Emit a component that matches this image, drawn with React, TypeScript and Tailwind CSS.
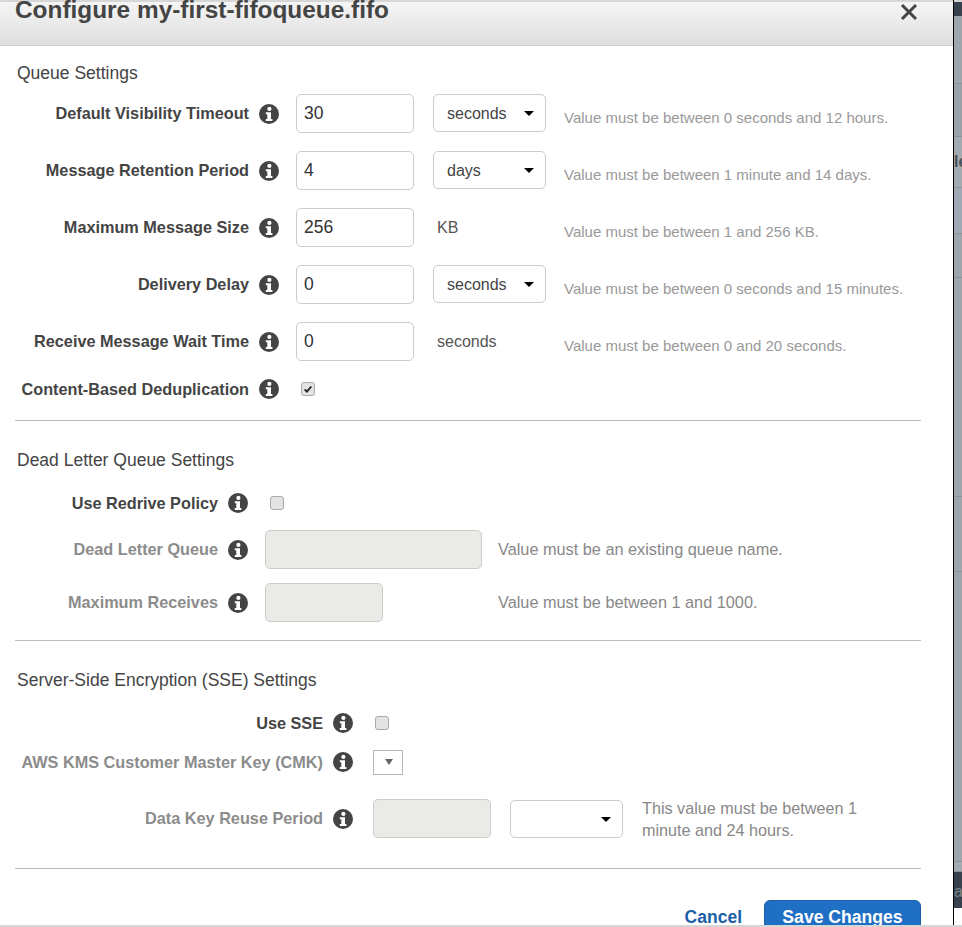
import React from "react";

function Info() {
  return (
    <svg viewBox="0 0 20 20" className="w-[20px] h-[20px] shrink-0">
      <circle cx="10" cy="10" r="10" fill="#444444" />
      <circle cx="10.4" cy="4.9" r="2.1" fill="#fff" />
      <path d="M6.8 8.3h5.2v6.7h1.4v2H6.8v-2h1.5v-4.7H6.8z" fill="#fff" />
    </svg>
  );
}

function Caret() {
  return <span className="w-0 h-0 border-x-[5px] border-x-transparent border-t-[5px] border-t-black" />;
}

function Row({ label, w, dim, h, tall, children }: { label: string; w: number; dim?: boolean; h: string; tall?: boolean; children?: React.ReactNode }) {
  return (
    <div className={`flex items-center ${h}`}>
      <div style={{ width: w }} className={`text-right font-bold text-[16.25px] leading-[20px] whitespace-nowrap ${tall ? "-mt-[2px]" : ""} ${dim ? "text-[#8c8c8c]" : "text-[#444444]"}`}>{label}</div>
      <div className="ml-[10px]"><Info /></div>
      <div className="ml-[17px] flex items-center h-full">{children}</div>
    </div>
  );
}

function Input({ v, w = "w-[118px]", off, extra = "" }: { v?: string; w?: string; off?: boolean; extra?: string }) {
  return <div className={`${w} ${extra} h-[39px] rounded-[5px] border border-[#cccccc] px-[7px] flex items-center text-[17.5px] text-[#333333] ${off ? "bg-[#eaeae7]" : "bg-white"}`}>{v}</div>;
}

function Select({ v }: { v?: string }) {
  return (
    <div className="self-start ml-[19px] w-[113px] h-[38px] rounded-[5px] border border-[#cccccc] bg-white pl-[13px] pr-[11px] flex items-center justify-between text-[16px] text-[#444444]">
      <span className="pt-[2px]">{v}</span>
      <Caret />
    </div>
  );
}

function Unit({ v }: { v: string }) {
  return <div className="ml-[23px] w-[109px] text-[16px] text-[#555555]">{v}</div>;
}

function Hint({ children }: { children: React.ReactNode }) {
  return <div className="text-[15px] leading-[22px] text-[#999999] whitespace-nowrap pt-[9px] ml-[18px]">{children}</div>;
}

function Check({ on }: { on?: boolean }) {
  return (
    <div className="ml-[5px] -mt-[1px] w-[14px] h-[14px] rounded-[3px] border border-[#a9a9a9] bg-[#e3e3e3] flex items-center justify-center">
      {on ? (
        <svg viewBox="0 0 12 12" className="w-[10px] h-[10px]"><path d="M2 6.5l2.6 2.6L10 3" stroke="#222" strokeWidth="2.2" fill="none" /></svg>
      ) : null}
    </div>
  );
}

function Heading({ children }: { children: React.ReactNode }) {
  return <div className="pl-[17px] text-[17.5px] leading-[24px] text-[#444444]">{children}</div>;
}

function Rule() {
  return <div className="ml-[15px] w-[906px] h-px bg-[#bdbdbd]" />;
}

function Band({ h, c = "bg-[#9ea6ac]", children }: { h: string; c?: string; children?: React.ReactNode }) {
  return <div className={`${h} ${c} shrink-0 border-b border-[#8b9298] overflow-hidden`}>{children}</div>;
}

export default function App() {
  return (
    <div className="relative w-[962px] h-[927px] overflow-hidden flex bg-white" style={{ fontFamily: '"Liberation Sans", Arial, sans-serif' }}>
      <div className="w-[953px] h-[927px] shrink-0 overflow-hidden">
        <div className="h-[2px] bg-[#d6d6d6]" />
        <div className="h-[44px] border-b border-[#cfcfcf] bg-gradient-to-b from-[#f5f5f5] to-[#dfdfdf] flex items-start justify-between pl-[15px] pr-[35px]">
          <div className="text-[24.4px] leading-[24px] font-bold text-[#444444] -mt-[4px]">Configure my-first-fifoqueue.fifo</div>
          <svg viewBox="0 0 18 18" className="w-[18px] h-[18px] mt-[1px]"><path d="M2 2l14 14M16 2L2 16" stroke="#444" strokeWidth="3" /></svg>
        </div>

        <div className="pt-[15px]"><Heading>Queue Settings</Heading></div>
        <div className="pt-[9px] flex flex-col gap-[18px]">
          <Row tall label="Default Visibility Timeout" w={249} h="h-[39px]"><Input v="30" /><Select v="seconds" /><Hint>Value must be between 0 seconds and 12 hours.</Hint></Row>
          <Row tall label="Message Retention Period" w={249} h="h-[39px]"><Input v="4" /><Select v="days" /><Hint>Value must be between 1 minute and 14 days.</Hint></Row>
          <Row tall label="Maximum Message Size" w={249} h="h-[39px]"><Input v="256" /><Unit v="KB" /><Hint>Value must be between 1 and 256 KB.</Hint></Row>
          <Row tall label="Delivery Delay" w={249} h="h-[39px]"><Input v="0" /><Select v="seconds" /><Hint>Value must be between 0 seconds and 15 minutes.</Hint></Row>
          <Row tall label="Receive Message Wait Time" w={249} h="h-[39px]"><Input v="0" /><Unit v="seconds" /><Hint>Value must be between 0 and 20 seconds.</Hint></Row>
        </div>
        <div className="mt-[9px]">
          <Row label="Content-Based Deduplication" w={249} h="h-[38px]"><Check on /></Row>
        </div>
        <div className="mt-[12px]"><Rule /></div>

        <div className="pt-[27px]"><Heading>Dead Letter Queue Settings</Heading></div>
        <div className="mt-[16px]">
          <Row label="Use Redrive Policy" w={218} h="h-[30px]"><Check /></Row>
        </div>
        <div className="mt-[12px]">
          <Row tall label="Dead Letter Queue" w={218} dim h="h-[39px]"><Input off w="w-[217px]" /><div className="ml-[16px] text-[16.3px] text-[#888888] whitespace-nowrap">Value must be an existing queue name.</div></Row>
        </div>
        <div className="mt-[14px]">
          <Row tall label="Maximum Receives" w={218} dim h="h-[39px]"><Input off /><div className="ml-[115px] text-[16.3px] text-[#888888] whitespace-nowrap">Value must be between 1 and 1000.</div></Row>
        </div>
        <div className="mt-[18px]"><Rule /></div>

        <div className="pt-[27px]"><Heading>Server-Side Encryption (SSE) Settings</Heading></div>
        <div className="mt-[16px]">
          <Row label="Use SSE" w={323} h="h-[30px]"><Check /></Row>
        </div>
        <div className="mt-[9px]">
          <Row label="AWS KMS Customer Master Key (CMK)" w={323} dim h="h-[30px]">
            <div className="ml-[3px] w-[30px] h-[25px] border border-[#b5b5b5] bg-white flex items-center justify-center pl-[2px]">
              <span className="w-0 h-0 border-x-[4px] border-x-transparent border-t-[6px] border-t-[#666666]" />
            </div>
          </Row>
        </div>
        <div className="mt-[22px]">
          <Row tall label="Data Key Reuse Period" w={323} dim h="h-[39px]">
            <Input off extra="ml-[3px]" />
            <div className="flex items-center h-full pt-[1px]"><Select /></div>
            <div className="ml-[19px] w-[240px] text-[16.2px] leading-[22px] text-[#888888]">This value must be between 1 minute and 24 hours.</div>
          </Row>
        </div>
        <div className="mt-[30px]"><Rule /></div>
        <div className="mt-[31px] ml-[15px] w-[906px] flex items-start justify-end">
          <div className="mt-[7px] text-[17.5px] leading-[20px] font-bold text-[#1a5fa8]">Cancel</div>
          <div className="ml-[22px] w-[157px] h-[40px] rounded-t-[6px] bg-[#1f6fc4] border border-[#1a5fa8] text-white font-bold text-[17.6px] leading-[20px] flex items-start justify-center pt-[6px]">Save Changes</div>
        </div>
      </div>
      <div className="w-px h-[927px] bg-black shrink-0" />
      <div className="flex-1 flex flex-col overflow-hidden">
        <div className="h-[2px] bg-[#d6d6d6] shrink-0" />
        <div className="h-[14px] bg-[#37424e] shrink-0" />
        <Band h="h-[68px]" />
        <Band h="h-[53px]" c="bg-[#9aa1a7]" />
        <Band h="h-[51px]" c="bg-[#a3aab0]">
          <div className="text-[16px] leading-[20px] font-bold text-[#4a4f55] mt-[15px] whitespace-nowrap">le</div>
        </Band>
        <Band h="h-[46px]" c="bg-[#a0a9b3]" />
        <Band h="h-[44px]" />
        <Band h="h-[219px]" />
        <Band h="h-[75px]" />
        <Band h="h-[290px]" />
        <Band h="h-[10px]" c="bg-[#a3aab0]" />
        <div className="h-[36px] bg-[#37424e] shrink-0 text-[16px] leading-[20px] text-[#7a8288] pt-[10px] whitespace-nowrap overflow-hidden">af</div>
        <div className="flex-1 bg-white" />
      </div>
      <div className="absolute left-0 bottom-0 w-[962px] h-[2px] bg-[#d6d6d6]" />
    </div>
  );
}
